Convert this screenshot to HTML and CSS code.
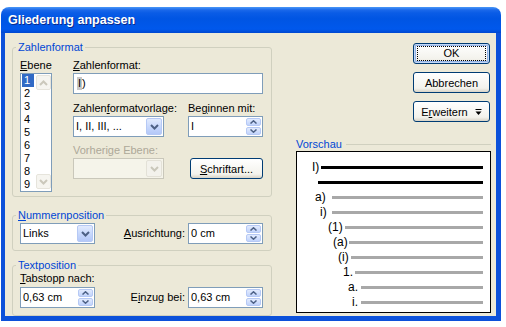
FILE: index.html
```html
<!DOCTYPE html>
<html lang="de">
<head>
  <meta charset="UTF-8">
  <meta name="viewport" content="width=device-width, initial-scale=1.0">
  <title>Gliederung anpassen</title>
  <link rel="stylesheet" href="styles.css">
</head>
<body>
  <div class="window">
    <div class="titlebar">Gliederung anpassen</div>

    <div class="client">
      <!-- linke Spalte: Gruppen -->
      <div class="left">
        <fieldset class="group g-format">
          <legend>Zahlenformat</legend>
          <div class="format-row">
            <div class="level-col">
              <div class="lbl"><u>E</u>bene</div>
              <div class="listbox">
                <ul class="items">
                  <li class="sel">1</li>
                  <li>2</li>
                  <li>3</li>
                  <li>4</li>
                  <li>5</li>
                  <li>6</li>
                  <li>7</li>
                  <li>8</li>
                  <li>9</li>
                </ul>
                <div class="vscroll">
                  <span class="sbtn"><svg width="9" height="6"><use href="#chev-up"/></svg></span>
                  <span class="sbtn"><svg width="9" height="6"><use href="#chev-down"/></svg></span>
                </div>
              </div>
            </div>

            <div class="fmt">
              <div class="lbl wide"><u>Z</u>ahlenformat:</div>
              <div class="textbox wide"><span class="field">I</span>)</div>

              <div class="lbl gap-a">Zahlen<u>f</u>ormatvorlage:</div>
              <div class="lbl gap-a">Be<u>g</u>innen mit:</div>
              <div class="combo">
                <span class="val">I, II, III, ...</span>
                <span class="drop"><svg width="9" height="6"><use href="#chev-down"/></svg></span>
              </div>
              <div class="spin">
                <span class="val">I</span>
                <span class="arrows">
                  <span><svg width="7" height="4"><use href="#tiny-up"/></svg></span>
                  <span><svg width="7" height="4"><use href="#tiny-down"/></svg></span>
                </span>
              </div>

              <div class="lbl wide disabled gap-b">Vorherige Ebene:</div>
              <div class="combo disabled gap-c">
                <span class="val"></span>
                <span class="drop"><svg width="9" height="6"><use href="#chev-down"/></svg></span>
              </div>
              <button class="btn font-btn"><u>S</u>chriftart...</button>
            </div>
          </div>
        </fieldset>

        <fieldset class="group g-numpos">
          <legend><u>N</u>ummernposition</legend>
          <div class="row">
            <div class="combo short">
              <span class="val">Links</span>
              <span class="drop"><svg width="9" height="6"><use href="#chev-down"/></svg></span>
            </div>
            <span class="lbl push"><u>A</u>usrichtung:</span>
            <div class="spin short">
              <span class="val">0 cm</span>
              <span class="arrows">
                <span><svg width="7" height="4"><use href="#tiny-up"/></svg></span>
                <span><svg width="7" height="4"><use href="#tiny-down"/></svg></span>
              </span>
            </div>
          </div>
        </fieldset>

        <fieldset class="group g-textpos">
          <legend>Textposition</legend>
          <div class="lbl"><u>T</u>abstopp nach:</div>
          <div class="row tab-row">
            <div class="spin short">
              <span class="val">0,63 cm</span>
              <span class="arrows">
                <span><svg width="7" height="4"><use href="#tiny-up"/></svg></span>
                <span><svg width="7" height="4"><use href="#tiny-down"/></svg></span>
              </span>
            </div>
            <span class="lbl push">E<u>i</u>nzug bei:</span>
            <div class="spin short">
              <span class="val">0,63 cm</span>
              <span class="arrows">
                <span><svg width="7" height="4"><use href="#tiny-up"/></svg></span>
                <span><svg width="7" height="4"><use href="#tiny-down"/></svg></span>
              </span>
            </div>
          </div>
        </fieldset>
      </div>

      <!-- rechte Spalte: Schaltflächen und Vorschau -->
      <div class="right">
        <button class="btn side default"><span>OK</span></button>
        <button class="btn side">Abbrechen</button>
        <button class="btn side">E<u>r</u>weitern
          <svg class="more" width="7" height="8" viewBox="0 0 7 8">
            <path d="M0.5 1.5h6" stroke="#000" stroke-width="1"/>
            <path d="M0.5 3.5h6l-3 3.5z" fill="#000"/>
          </svg>
        </button>

        <div class="preview-head">Vorschau</div>
        <div class="preview">
          <div class="pv-row lv1 strong"><span class="pv-num">I)</span><span class="pv-line"></span></div>
          <div class="pv-row lv2 strong"><span class="pv-num"></span><span class="pv-line"></span></div>
          <div class="pv-row lv3"><span class="pv-num">a)</span><span class="pv-line"></span></div>
          <div class="pv-row lv4"><span class="pv-num">i)</span><span class="pv-line"></span></div>
          <div class="pv-row lv5"><span class="pv-num">(1)</span><span class="pv-line"></span></div>
          <div class="pv-row lv6"><span class="pv-num">(a)</span><span class="pv-line"></span></div>
          <div class="pv-row lv7"><span class="pv-num">(i)</span><span class="pv-line"></span></div>
          <div class="pv-row lv8"><span class="pv-num">1.</span><span class="pv-line"></span></div>
          <div class="pv-row lv9"><span class="pv-num">a.</span><span class="pv-line"></span></div>
          <div class="pv-row lv10"><span class="pv-num">i.</span><span class="pv-line"></span></div>
        </div>
      </div>
    </div>
  </div>

  <!-- Pfeil-Symbole -->
  <svg class="defs" aria-hidden="true">
    <symbol id="chev-down" viewBox="0 0 9 6">
      <polyline points="1,1 4.5,4.5 8,1" fill="none" stroke="currentColor" stroke-width="2"/>
    </symbol>
    <symbol id="chev-up" viewBox="0 0 9 6">
      <polyline points="1,5 4.5,1.5 8,5" fill="none" stroke="currentColor" stroke-width="2"/>
    </symbol>
    <symbol id="tiny-up" viewBox="0 0 7 4">
      <polyline points="0.5,3.5 3.5,0.8 6.5,3.5" fill="none" stroke="currentColor" stroke-width="1.5"/>
    </symbol>
    <symbol id="tiny-down" viewBox="0 0 7 4">
      <polyline points="0.5,0.5 3.5,3.2 6.5,0.5" fill="none" stroke="currentColor" stroke-width="1.5"/>
    </symbol>
  </svg>
</body>
</html>
```

FILE: styles.css
```css
body {
  margin: 0;
  background: #fff;
  font-family: "Liberation Sans", Arial, sans-serif;
  font-size: 11px;
  line-height: 13px;
  color: #000;
}

.defs {
  display: none;
}

/* Fensterrahmen */
.window {
  width: 500px;
  margin: 7px 0 0 1px;
  border-radius: 8px 8px 0 0;
  overflow: hidden;
}
.titlebar {
  height: 26px;
  padding-left: 7px;
  line-height: 27px;
  font-size: 12.5px;
  font-weight: bold;
  color: #fff;
  text-shadow: 1px 1px 0 #0a2a8c;
  background: linear-gradient(to bottom, #4a98f7 0, #1a68ea 3px, #0a5ce6 6px, #0055e3 45%, #0058ec 85%, #0048d0 100%);
}
.client {
  display: flex;
  gap: 24px;
  height: 283px;
  padding: 0 5px 0 7px;
  background: #ece9d8;
  border: solid #0c51da;
  border-width: 0 5px 5px 4px;
}

.left {
  width: 260px;
  padding-top: 8px;
}
.right {
  width: 195px;
  padding-top: 10px;
  display: flex;
  flex-direction: column;
}

/* Gruppenrahmen */
.group {
  margin: 0;
  min-width: 0;
  border: 1px solid #d0d0bf;
  border-radius: 3px;
}
.group legend {
  padding: 0 2px;
  margin-left: -4px;
  color: #0046d5;
  line-height: 13px;
}
.g-format {
  padding: 5px 8px 4px 7px;
}
.g-numpos {
  margin-top: 12px;
  padding: 1px 8px 6px 7px;
}
.g-textpos {
  margin-top: 8px;
  padding: 0 8px 7px 7px;
}

.lbl {
  white-space: nowrap;
}
.disabled.lbl {
  color: #aca899;
}

/* Ebene-Liste */
.format-row {
  display: flex;
  gap: 21px;
}
.level-col {
  width: 32px;
}
.listbox {
  display: flex;
  margin-top: 1px;
  height: 119px;
  box-sizing: border-box;
  border: 1px solid #7f9db9;
  background: #fff;
  overflow: hidden;
}
.items {
  list-style: none;
  margin: 0;
  padding: 0 0 0 1px;
  width: 15px;
  box-sizing: border-box;
}
.items li {
  width: 12px;
  height: 13px;
  padding-left: 2px;
  box-sizing: border-box;
}
.items li.sel {
  background: #316ac5;
  color: #fff;
}
.vscroll {
  width: 15px;
  padding: 1px 0 2px;
  display: flex;
  flex-direction: column;
  justify-content: space-between;
}
.sbtn {
  height: 15px;
  display: flex;
  align-items: center;
  justify-content: center;
  box-sizing: border-box;
  border: 1px solid #e6e4dc;
  border-radius: 2px;
  background: #f6f5f0;
  color: #cbc8bc;
}

/* Zahlenformat-Felder */
.fmt {
  display: grid;
  grid-template-columns: 91px 75px;
  column-gap: 24px;
  align-items: end;
  align-content: start;
}
.fmt .wide {
  grid-column: 1 / 3;
}
.fmt .gap-a {
  margin-top: 8px;
}
.fmt .gap-b {
  margin-top: 7px;
}
.fmt .gap-c {
  margin-top: 13px;
}
.fmt .combo,
.fmt .spin,
.fmt .textbox {
  margin-top: 1px;
}

.textbox,
.combo,
.spin {
  display: flex;
  align-items: center;
  height: 21px;
  box-sizing: border-box;
  border: 1px solid #7f9db9;
  background: #fff;
}
.textbox {
  padding-left: 3px;
}
.field {
  background: #c8c8c8;
  padding: 0 1px;
}
.val {
  flex: 1;
  padding-left: 2px;
  white-space: nowrap;
}
.combo .drop {
  width: 16px;
  height: 17px;
  margin: 0 1px;
  display: flex;
  align-items: center;
  justify-content: center;
  box-sizing: border-box;
  border: 1px solid #b6c9f5;
  border-radius: 2px;
  background: linear-gradient(to bottom, #e2ebfe, #c6d7fc 55%, #b4c8f8);
  color: #4d6185;
}
.combo.disabled {
  border-color: #c9c7ba;
  background: #f5f4ea;
}
.combo.disabled .drop {
  border-color: #e3e1d7;
  background: #f3f2ec;
  color: #c9c7ba;
}
.spin .arrows {
  width: 15px;
  align-self: stretch;
  margin: 1px;
  display: flex;
  flex-direction: column;
  gap: 1px;
}
.spin .arrows span {
  flex: 1;
  display: flex;
  align-items: center;
  justify-content: center;
  border: 1px solid #b6c9f5;
  border-radius: 2px;
  background: linear-gradient(to bottom, #e2ebfe, #c1d3fb);
  color: #4d6185;
}

.short {
  width: 75px;
}
.row {
  display: flex;
  align-items: center;
}
.row .push {
  margin-left: auto;
  margin-right: 3px;
}
.tab-row {
  margin-top: 2px;
}

/* Schaltflächen */
.btn {
  height: 21px;
  padding: 0;
  box-sizing: border-box;
  border: 1px solid #003c74;
  border-radius: 3px;
  background: linear-gradient(to bottom, #fff, #f3f2ec 80%, #d8d3c6);
  font: 11px "Liberation Sans", Arial, sans-serif;
  color: #000;
}
.font-btn {
  justify-self: end;
  width: 73px;
}
.btn.side {
  width: 77px;
  margin: 0 0 8px 117px;
  display: flex;
  align-items: center;
  justify-content: center;
}
.btn.default {
  box-shadow: inset 0 0 0 1px #c4d8f6, inset 0 0 0 2px #93b4e8;
}
.btn.default span {
  width: 67px;
  height: 13px;
  line-height: 13px;
  outline: 1px dotted #000;
}
.more {
  margin-left: 7px;
}

/* Vorschau */
.preview-head {
  display: flex;
  align-items: center;
  margin-top: 8px;
  height: 13px;
  color: #0046d5;
}
.preview-head::after {
  content: "";
  flex: 1;
  height: 1px;
  margin-left: 4px;
  background: #d0d0bf;
}
.preview {
  height: 162px;
  box-sizing: border-box;
  border: 1px solid #000;
  background: #fff;
  padding: 8px 7px 0 0;
  font-size: 12px;
}
.pv-row {
  display: flex;
  align-items: center;
  height: 15px;
}
.pv-num {
  flex: none;
  line-height: 15px;
  white-space: nowrap;
}
.pv-line {
  flex: 1;
  height: 3px;
  background: #a8a8a8;
}
.strong .pv-line {
  background: #000;
}

.lv1 { padding-left: 15px; }
.lv1 .pv-num { width: 9px; }
.lv2 { padding-left: 21px; }
.lv2 .pv-num { width: 0; }
.lv3 { padding-left: 18px; }
.lv3 .pv-num { width: 17px; }
.lv4 { padding-left: 23px; }
.lv4 .pv-num { width: 12px; }
.lv5 { padding-left: 31px; }
.lv5 .pv-num { width: 17px; }
.lv6 { padding-left: 36px; }
.lv6 .pv-num { width: 16px; }
.lv7 { padding-left: 41px; }
.lv7 .pv-num { width: 13px; }
.lv8 { padding-left: 46px; }
.lv8 .pv-num { width: 12px; }
.lv9 { padding-left: 51px; }
.lv9 .pv-num { width: 13px; }
.lv10 { padding-left: 55px; }
.lv10 .pv-num { width: 9px; }
```
